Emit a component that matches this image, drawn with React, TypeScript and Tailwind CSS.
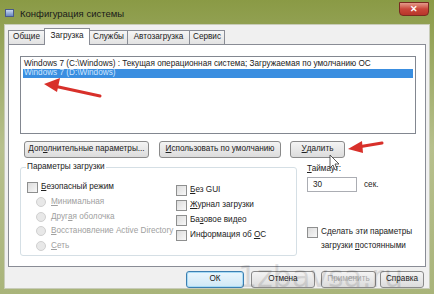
import React from "react";

const font = { fontFamily: '"Liberation Sans", Arial, sans-serif' };

function Check({ label, disabled }: { label: React.ReactNode; disabled?: boolean }) {
  return (
    <div className="flex items-center gap-[3px] h-[14px]">
      <div className="w-[11px] h-[11px] border border-[#8e8f8f] bg-gradient-to-br from-[#dcdcdc] to-[#f8f8f8] shrink-0" />
      <span className={disabled ? "text-[#9a9a9a]" : "text-[#222]"}>{label}</span>
    </div>
  );
}

function Radio({ label }: { label: React.ReactNode }) {
  return (
    <div className="flex items-center gap-[5px] h-[14.5px]">
      <div className="w-[10px] h-[10px] rounded-full border border-[#d0d0d0] bg-[#e8e8e8] shrink-0" />
      <span className="text-[#a0a0a0]">{label}</span>
    </div>
  );
}

function Btn({ children, className = "", focused, disabled }: { children: React.ReactNode; className?: string; focused?: boolean; disabled?: boolean }) {
  return (
    <div
      className={
        "h-[17px] flex items-center justify-center rounded-[3px] border " +
        (focused
          ? "border-[#3c7fb1] bg-gradient-to-b from-[#eaf6fd] to-[#cfe8f6] shadow-[inset_0_0_0_1px_#a8dbf5] "
          : "border-[#8a8a8a] bg-gradient-to-b from-[#f4f4f4] to-[#dcdcdc] ") +
        (disabled ? "text-[#a8a8a8] " : "text-[#222] ") +
        className
      }
    >
      {children}
    </div>
  );
}

export default function App() {
  return (
    <div
      className="w-[434px] h-[294px] overflow-hidden relative flex flex-col bg-gradient-to-b from-[#8a9a45] via-[#b7c08d] to-[#a9b47a] text-[8.2px] leading-none whitespace-nowrap"
      style={font}
    >
      {/* title bar */}
      <div className="h-[24px] flex items-center px-[5px] relative">
        <div className="w-[9px] h-[8px] border border-[#4a5a8a] bg-gradient-to-b from-[#c8d8f0] to-[#6a88c0] mr-[6px] mt-[2px]" />
        <span className="text-[9.5px] text-[#1a1a1a] mt-[3px]">Конфигурация системы</span>
        <div className="ml-auto mb-[6px] w-[30px] h-[14px] rounded-b-[4px] bg-gradient-to-b from-[#e39a8a] via-[#c9463a] to-[#b8352a] border border-[#7a2a20] flex items-center justify-center text-white text-[9px] font-bold">
          ✕
        </div>
      </div>

      {/* client area */}
      <div className="flex-1 mx-[4px] bg-[#f0f0f0] border border-[#c8ccb8] flex flex-col px-[3px] pt-[3px]">
        {/* tabs */}
        <div className="flex items-end h-[16px] relative z-10">
          <div className="h-[14px] w-[37px] flex items-center justify-center border border-[#898c95] border-b-0 bg-gradient-to-b from-[#f6f6f6] to-[#e2e2e2] text-[#222]">Общие</div>
          <div className="h-[17px] w-[46px] -ml-[1px] flex items-start justify-center pt-[3px] border border-[#898c95] border-b-0 bg-white text-[#222] -mb-[1px] pb-[1px]">Загрузка</div>
          <div className="h-[14px] w-[38px] flex items-center justify-center border border-[#898c95] border-b-0 border-l-0 bg-gradient-to-b from-[#f6f6f6] to-[#e2e2e2] text-[#222]">Службы</div>
          <div className="h-[14px] w-[62px] flex items-center justify-center border border-[#898c95] border-b-0 border-l-0 bg-gradient-to-b from-[#f6f6f6] to-[#e2e2e2] text-[#222]">Автозагрузка</div>
          <div className="h-[14px] w-[35px] flex items-center justify-center border border-[#898c95] border-b-0 border-l-0 bg-gradient-to-b from-[#f6f6f6] to-[#e2e2e2] text-[#222]">Сервис</div>
        </div>

        {/* panel */}
        <div className="h-[223px] bg-white border border-[#898c95] flex flex-col pl-[11px] pr-[9px] pt-[11px]">
          {/* list */}
          <div className="h-[78px] border border-[#828790] px-[2px] pt-[3px] flex flex-col">
            <div className="h-[9px] flex items-center pl-[1px] text-[#222]">
              Windows 7 (C:\Windows) : Текущая операционная система; Загружаемая по умолчанию ОС
            </div>
            <div className="h-[9px] flex items-center pl-[1px] bg-[#3a8ee0] text-[#cfe6ff]">
              Windows 7 (D:\Windows)
            </div>
          </div>

          {/* buttons */}
          <div className="flex mt-[7px] pl-[4px]">
            <Btn className="w-[125px]">Доп<u>о</u>лнительные параметры...</Btn>
            <Btn className="w-[122px] ml-[10px] bg-[#e9eff5]"><u>И</u>спользовать по умолчанию</Btn>
            <Btn className="w-[55px] ml-[9px]"><u>У</u>далить</Btn>
          </div>

          {/* lower section */}
          <div className="flex mt-[9px]">
            <div className="w-[277px] h-[89px] border border-[#d5dfe5] rounded-[3px] relative px-[6px] pt-[12px]">
              <span className="absolute -top-[5px] left-[5px] bg-white px-[1px] text-[#222]">Параметры загрузки</span>
              <div className="flex">
                <div className="flex flex-col w-[149px]">
                  <Check label={<><u>Б</u>езопасный режим</>} />
                  <div className="flex flex-col pl-[9px] mt-[1px]">
                    <Radio label={<><u>М</u>инимальная</>} />
                    <Radio label={<>Друг<u>а</u>я оболочка</>} />
                    <Radio label={<><u>В</u>осстановление Active Directory</>} />
                    <Radio label={<><u>С</u>еть</>} />
                  </div>
                </div>
                <div className="flex flex-col pt-[3px] gap-[1px]">
                  <Check label={<><u>Б</u>ез GUI</>} />
                  <Check label={<><u>Ж</u>урнал загрузки</>} />
                  <Check label={<>Ба<u>з</u>овое видео</>} />
                  <Check label={<>Информация об <u>О</u>С</>} />
                </div>
              </div>
            </div>

            <div className="flex flex-col ml-[10px] -mt-[2px]">
              <span className="text-[#222]"><u>Т</u>аймаут:</span>
              <div className="flex items-center mt-[4px]">
                <div className="w-[50px] h-[15px] border border-[#abadb3] flex items-center pl-[5px] text-[#222]">30</div>
                <span className="ml-[7px] text-[#222]">сек.</span>
              </div>
              <div className="flex items-start mt-[35px] gap-[3px]">
                <div className="w-[11px] h-[11px] border border-[#8e8f8f] bg-gradient-to-br from-[#dcdcdc] to-[#f8f8f8] shrink-0" />
                <span className="text-[#222] leading-[14px] -mt-[2px]">
                  Сделать эти параметры
                  <br />
                  загрузки <u>п</u>остоянными
                </span>
              </div>
            </div>
          </div>
        </div>

        {/* bottom buttons */}
        <div className="flex justify-end mt-[4px] pr-[2px]">
          <Btn className="w-[58px]" focused>ОК</Btn>
          <Btn className="w-[64px] ml-[7px]">Отмена</Btn>
          <Btn className="w-[55px] ml-[6px]" disabled>Применить</Btn>
          <Btn className="w-[44px] ml-[4px]">Справка</Btn>
        </div>
      </div>
      <div className="h-[5px]" />

      {/* red arrows overlay */}
      <svg className="absolute left-0 top-0 pointer-events-none" width="434" height="294">
        <line x1="100" y1="96" x2="54" y2="86" stroke="#d8302a" strokeWidth="3" strokeLinecap="round" />
        <polygon points="44,84 60,78 57,92" fill="#d8302a" />
        <line x1="382" y1="143" x2="358" y2="147" stroke="#d8302a" strokeWidth="3" strokeLinecap="round" />
        <polygon points="348,149 362,141 363,153" fill="#d8302a" />
        <path d="M330 155 L330 168 L333 165 L335 170 L337 169 L335 164 L339 164 Z" fill="#fff" stroke="#333" strokeWidth="0.8" />
      </svg>

      {/* watermark */}
      <div className="absolute left-[238px] top-[262px] text-[30px] text-[#000] opacity-[0.1] pointer-events-none" style={{ fontFamily: '"DejaVu Sans", sans-serif' }}>
        1zbavsa.ru
      </div>
    </div>
  );
}
